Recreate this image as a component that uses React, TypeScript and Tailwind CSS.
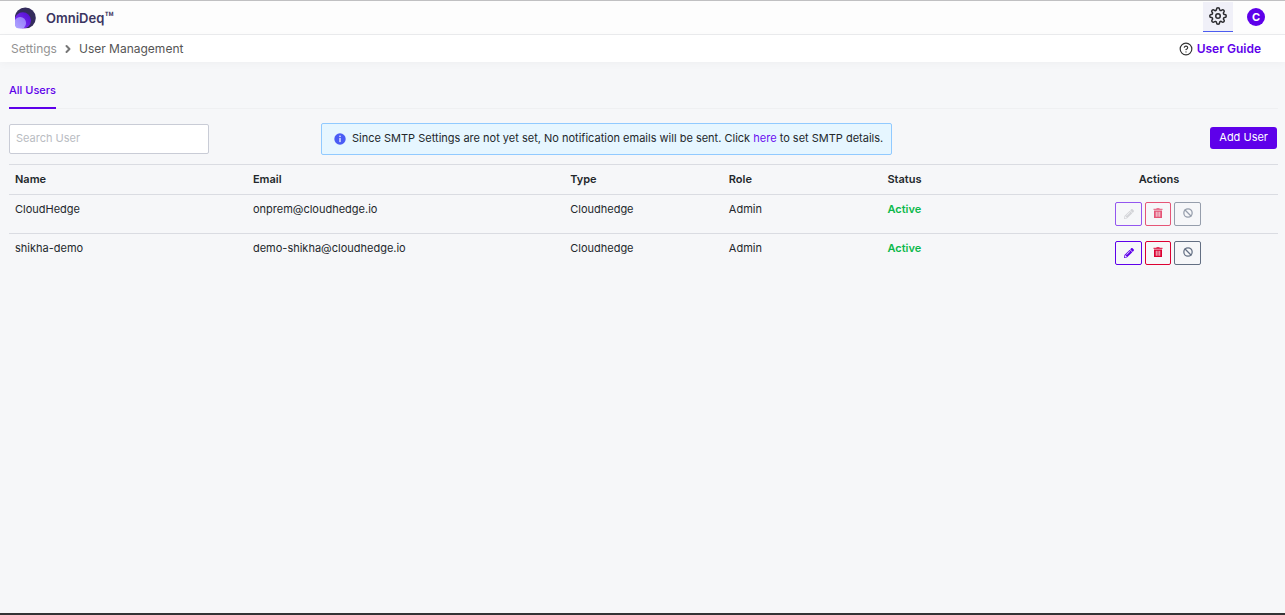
import React, { useState } from "react";
import { FaPencilAlt } from "react-icons/fa";
import { FiSettings } from "react-icons/fi";
import { Ban, ChevronRight, CircleHelp } from "lucide-react";

interface User {
  name: string;
  email: string;
  type: string;
  role: string;
  status: string;
  locked: boolean;
}

const users: User[] = [
  {
    name: "CloudHedge",
    email: "onprem@cloudhedge.io",
    type: "Cloudhedge",
    role: "Admin",
    status: "Active",
    locked: true,
  },
  {
    name: "shikha-demo",
    email: "demo-shikha@cloudhedge.io",
    type: "Cloudhedge",
    role: "Admin",
    status: "Active",
    locked: false,
  },
];

const App: React.FC = () => {
  const [search, setSearch] = useState("");
  const visibleUsers = users.filter((user) =>
    user.name.toLowerCase().includes(search.toLowerCase())
  );

  return (
    <div className="flex min-h-screen flex-col border-t border-b-2 border-t-[#c0c0c2] border-b-[#333335] bg-[#f6f7f9] font-[Inter,sans-serif] text-[11px] leading-4 text-[#23282c]">
      <TopBar />
      <Breadcrumb />

      <main className="flex-1 pt-5 pr-[7px] pl-[9px]">
        {/* Tabs */}
        <div className="flex border-b border-[#eff0f2]">
          <button
            type="button"
            className="-mb-px border-b-2 border-[#5e00ea] pb-[9px] font-medium text-[#5e00ea]"
          >
            All Users
          </button>
        </div>

        {/* Toolbar */}
        <div className="grid grid-cols-[312px_auto_1fr] items-center pt-3.5 pb-[9px]">
          <input
            type="text"
            aria-label="Search User"
            placeholder="Search User"
            value={search}
            onChange={(e) => setSearch(e.target.value)}
            className="h-[30px] w-[200px] rounded-xs border border-[#c9ccd6] bg-white px-1.5 pb-0.5 outline-none placeholder:text-[#b9bcc2]"
          />
          <div className="flex h-8 items-center gap-1.5 rounded-xs border border-[#91caff] bg-[#e6f6ff] pr-2 pl-3">
            <InfoIcon />
            <p className="pb-0.5">
              Since SMTP Settings are not yet set, No notification emails will
              be sent. Click{" "}
              <a href="#smtp" className="text-[#6a0ff0]">
                here
              </a>{" "}
              to set SMTP details.
            </p>
          </div>
          <button
            type="button"
            className="mr-px mb-0.5 h-[22px] justify-self-end rounded-[3px] bg-[#5e00ea] px-[9px] pb-0.5 text-white"
          >
            Add User
          </button>
        </div>

        <UserTable users={visibleUsers} />
      </main>
    </div>
  );
};

const TopBar = () => (
  <header className="flex h-[34px] items-center justify-between border-b border-[#ebecee] bg-[#fdfdfd] pr-5 pl-3.5">
    <div className="flex items-center gap-2.5">
      <Logo />
      <span className="text-[13px] font-semibold text-[#3b3561]">
        OmniDeq
        <span className="font-[Roboto,sans-serif] text-base leading-none font-medium">
          ™
        </span>
      </span>
    </div>
    <div className="flex items-center gap-3.5 pb-0.5">
      <button
        type="button"
        aria-label="Settings"
        className="flex h-[30px] w-[30px] items-center justify-center border-b border-[#4c5cf0] bg-[#f0f0f8] text-[#2b2b2f]"
      >
        <FiSettings size={18} />
      </button>
      <button
        type="button"
        aria-label="Account"
        className="h-[18px] w-[18px] rounded-full bg-[#5e00ea] text-[11px] leading-[18px] font-bold text-white"
      >
        C
      </button>
    </div>
  </header>
);

const Breadcrumb = () => (
  <div className="flex h-[27px] items-center justify-between bg-white pr-6 pl-[11px] text-xs shadow-[0_2px_8px_rgba(0,0,0,0.03)]">
    <nav aria-label="Breadcrumb" className="flex items-center gap-[5px]">
      <a href="#settings" className="text-[#929292]">
        Settings
      </a>
      <ChevronRight size={12} strokeWidth={4} className="text-[#777777]" />
      <span className="text-[#555555]">User Management</span>
    </nav>
    <a
      href="#guide"
      className="flex items-center gap-1 font-semibold text-[#5e00ea]"
    >
      <CircleHelp size={14} className="text-[#333333]" />
      User Guide
    </a>
  </div>
);

const UserTable = ({ users }: { users: User[] }) => (
  <table className="w-full table-fixed border-collapse text-left">
    <colgroup>
      <col className="w-[18.75%]" />
      <col className="w-[25%]" />
      <col className="w-[12.5%]" />
      <col className="w-[12.5%]" />
      <col className="w-[12.5%]" />
      <col className="w-[18.75%]" />
    </colgroup>
    <thead>
      <tr className="h-[30px] border-y border-[#dadce2]">
        <th className="px-1.5 pb-0.5 font-semibold">Name</th>
        <th className="px-1.5 pb-0.5 font-semibold">Email</th>
        <th className="px-1.5 pb-0.5 font-semibold">Type</th>
        <th className="px-1.5 pb-0.5 font-semibold">Role</th>
        <th className="px-1.5 pb-0.5 font-semibold">Status</th>
        <th className="px-1.5 pb-0.5 text-center font-semibold">Actions</th>
      </tr>
    </thead>
    <tbody>
      {users.map((user) => (
        <tr
          key={user.email}
          className="border-b border-[#dadce2] align-top last:border-b-0"
        >
          <td className="px-1.5 pt-1.5">{user.name}</td>
          <td className="px-1.5 pt-1.5">{user.email}</td>
          <td className="px-1.5 pt-1.5">{user.type}</td>
          <td className="px-1.5 pt-1.5">{user.role}</td>
          <td className="px-1.5 pt-1.5 font-semibold text-[#0cb94b]">
            {user.status}
          </td>
          <td className="px-1.5 py-[7px]">
            <RowActions locked={user.locked} />
          </td>
        </tr>
      ))}
    </tbody>
  </table>
);

const RowActions = ({ locked }: { locked: boolean }) => (
  <div className="flex justify-center gap-[3px] pr-0.5">
    <button
      type="button"
      aria-label="Edit user"
      disabled={locked}
      className="flex h-6 w-[27px] items-center justify-center rounded-xs border border-[#5e00ea] text-[#5e00ea] disabled:border-[#5e00ea]/65 disabled:text-[#d3d4d8]"
    >
      <FaPencilAlt size={10} />
    </button>
    <button
      type="button"
      aria-label="Delete user"
      disabled={locked}
      className="flex h-6 w-[26px] items-center justify-center rounded-xs border border-[#dc0032] pb-0.5 text-[#dc0032] disabled:opacity-65"
    >
      <TrashIcon />
    </button>
    <button
      type="button"
      aria-label="Block user"
      disabled={locked}
      className="flex h-6 w-[27px] items-center justify-center rounded-xs border border-[#636f83] pb-0.5 text-[#636f83] disabled:opacity-65"
    >
      <Ban size={10} strokeWidth={3} />
    </button>
  </div>
);

const TrashIcon = () => (
  <svg width="10" height="10" viewBox="0 0 10 10" fill="currentColor">
    <path d="M3.5 0h3v.7H9.5v1.4H.5V.7h3z" opacity="0.8" />
    <path
      fillRule="evenodd"
      d="M1 2.4h8V10H1zM2.8 3.8v5h.8v-5zM4.6 3.8v5h.8v-5zM6.4 3.8v5h.8v-5z"
    />
  </svg>
);

const InfoIcon = () => (
  <svg width="12" height="12" viewBox="0 0 12 12">
    <circle cx="6" cy="6" r="5.7" fill="#4a5cf5" />
    <circle cx="6" cy="3.3" r="0.8" fill="#ffffff" />
    <rect x="5.4" y="4.9" width="1.2" height="4.2" fill="#ffffff" />
  </svg>
);

const Logo = () => (
  <svg width="22" height="22" viewBox="0 0 22 22">
    <defs>
      <clipPath id="logo-clip">
        <path d="M1 0h21v21.5H1z" />
      </clipPath>
      <linearGradient id="logo-mid" x1="0" y1="1" x2="1" y2="0">
        <stop offset="0" stopColor="#8a3cff" />
        <stop offset="1" stopColor="#4f0ad0" />
      </linearGradient>
      <linearGradient id="logo-small" x1="0" y1="1" x2="1" y2="0">
        <stop offset="0" stopColor="#b0a8ff" />
        <stop offset="1" stopColor="#9478fb" />
      </linearGradient>
    </defs>
    <g clipPath="url(#logo-clip)">
      <circle cx="11.3" cy="11" r="10.5" fill="#342c5c" />
      <circle cx="8.8" cy="13.5" r="8.2" fill="url(#logo-mid)" />
      <circle cx="6.2" cy="16" r="5.9" fill="url(#logo-small)" />
    </g>
  </svg>
);

export default App;
